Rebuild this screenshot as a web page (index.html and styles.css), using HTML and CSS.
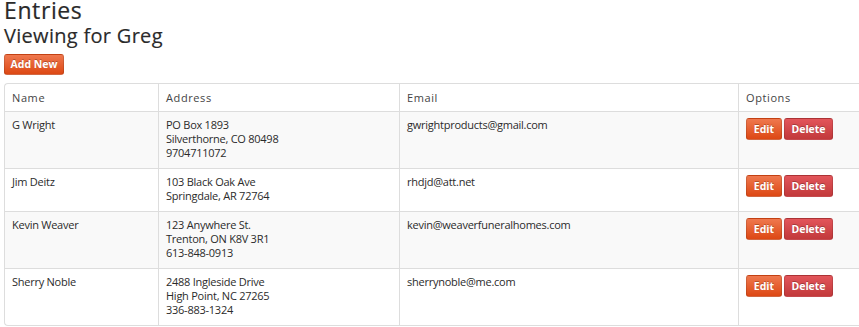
FILE: index.html
```html
<!DOCTYPE html>
<html>
<head>
<meta charset="utf-8">
<link rel="stylesheet" href="styles.css">
</head>
<body>
<div class="page">
  <h1 class="title">Entries</h1>
  <h2 class="subtitle">Viewing for Greg</h2>
  <a class="btn btn-primary btn-add" href="#">Add New</a>
  <table class="entries">
    <colgroup>
      <col class="c-name"><col class="c-addr"><col class="c-email"><col class="c-opt">
    </colgroup>
    <thead>
      <tr><th>Name</th><th>Address</th><th>Email</th><th>Options</th></tr>
    </thead>
    <tbody>
      <tr class="odd">
        <td>G Wright</td>
        <td>PO Box 1893<br>Silverthorne, CO 80498<br>9704711072</td>
        <td>gwrightproducts@gmail.com</td>
        <td><div class="opts"><a class="btn btn-primary" href="#">Edit</a><a class="btn btn-danger" href="#">Delete</a></div></td>
      </tr>
      <tr>
        <td>Jim Deitz</td>
        <td>103 Black Oak Ave<br>Springdale, AR 72764</td>
        <td>rhdjd@att.net</td>
        <td><div class="opts"><a class="btn btn-primary" href="#">Edit</a><a class="btn btn-danger" href="#">Delete</a></div></td>
      </tr>
      <tr class="odd">
        <td>Kevin Weaver</td>
        <td>123 Anywhere St.<br>Trenton, ON K8V 3R1<br>613-848-0913</td>
        <td>kevin@weaverfuneralhomes.com</td>
        <td><div class="opts"><a class="btn btn-primary" href="#">Edit</a><a class="btn btn-danger" href="#">Delete</a></div></td>
      </tr>
      <tr>
        <td>Sherry Noble</td>
        <td>2488 Ingleside Drive<br>High Point, NC 27265<br>336-883-1324</td>
        <td>sherrynoble@me.com</td>
        <td><div class="opts"><a class="btn btn-primary" href="#">Edit</a><a class="btn btn-danger" href="#">Delete</a></div></td>
      </tr>
    </tbody>
  </table>
</div>
</body>
</html>
```

FILE: styles.css
```css
html, body {
  margin: 0;
  padding: 0;
  overflow: hidden;
  background: #fff;
}
body {
  font-family: "Open Sans", "Noto Sans", "DejaVu Sans", sans-serif;
  color: #2b2b2b;
  font-size: 11px;
}
.page {
  display: flex;
  flex-direction: column;
  align-items: flex-start;
  padding: 0 0 0 4px;
}
.title {
  margin: 0;
  font-size: 23px;
  line-height: 20px;
  height: 20px;
  font-weight: 400;
  letter-spacing: 0.6px;
  color: #2a2a2a;
  -webkit-text-stroke: 0.2px #2a2a2a;
}
.subtitle {
  margin: 4px 0 0;
  font-size: 20px;
  line-height: 24px;
  height: 24px;
  font-weight: 400;
  letter-spacing: 0.3px;
  color: #2a2a2a;
  -webkit-text-stroke: 0.15px #2a2a2a;
}
.btn {
  display: block;
  box-sizing: border-box;
  height: 22px;
  line-height: 20px;
  padding: 0 8px;
  border-radius: 3px;
  font-weight: 700;
  font-size: 10.5px;
  color: #fff;
  text-decoration: none;
  text-shadow: 0 -1px 0 rgba(0,0,0,0.25);
  border: 1px solid rgba(0,0,0,0.12);
}
.btn-primary {
  background: linear-gradient(to bottom, #ef784e, #dd4814);
}
.btn-danger {
  background: linear-gradient(to bottom, #e2555a, #c2393b);
}
.btn-add {
  margin-top: 6px;
  height: 21px;
  line-height: 19px;
  width: 60px;
  text-align: center;
  padding: 0;
}
.entries {
  margin-top: 8px;
  border-collapse: separate;
  border-spacing: 0;
  table-layout: fixed;
  width: 880px;
  border: 1px solid #ddd;
  border-right: 0;
  border-radius: 4px 0 0 4px;
}
.c-name { width: 153px; }
.c-addr { width: 241px; }
.c-email { width: 339px; }
.c-opt { width: 146px; }
.entries th, .entries td {
  text-align: left;
  vertical-align: top;
  border-left: 1px solid #ddd;
  border-top: 1px solid #ddd;
  line-height: 14px;
  letter-spacing: -0.25px;
  padding: 6px 7px 8px;
}
.entries th:first-child, .entries td:first-child { border-left: 0; }
.entries thead th {
  border-top: 0;
  font-weight: 400;
  color: #444;
  letter-spacing: 0.6px;
  padding: 7px 7px 6px;
}
.entries tr.odd td { background: #f9f9f9; }
.opts {
  display: flex;
  gap: 2px;
}
.opts .btn { letter-spacing: 0; }
.opts .btn-primary { width: 36px; padding: 0; text-align: center; }
.opts .btn-danger { width: 49px; padding: 0; text-align: center; }
```
